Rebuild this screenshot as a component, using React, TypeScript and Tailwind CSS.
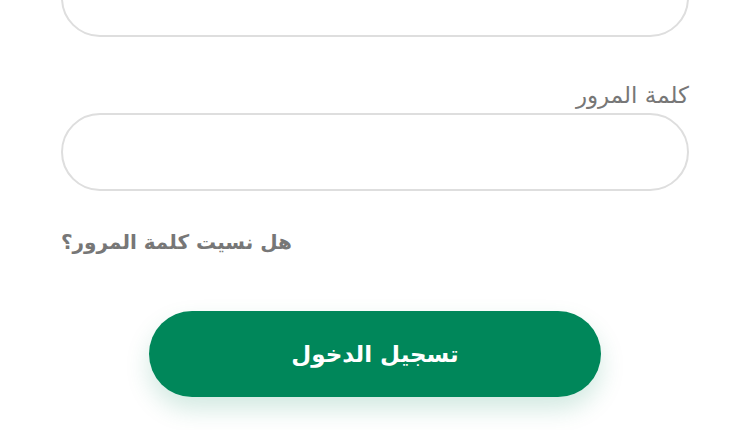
export default function App() {
  return (
    <div
      dir="rtl"
      className="w-[750px] h-[430px] overflow-hidden bg-white font-['DejaVu_Sans',sans-serif]"
    >
      <div className="mx-auto -mt-[41px] flex w-[628px] flex-col">
        {/* email field (cut off at top) */}
        <input
          type="text"
          className="h-[78px] w-full rounded-full border-2 border-[#dedede] bg-white px-6 outline-none"
        />

        <label className="mt-[42px] text-[23px] leading-[32px] text-[#777777]">
          كلمة المرور
        </label>
        <input
          type="password"
          className="mt-[2px] h-[78px] w-full rounded-full border-2 border-[#dedede] bg-white px-6 outline-none"
        />

        <a className="mt-[37px] text-left text-[20px] font-bold leading-[28px] text-[#777777]">
          هل نسيت كلمة المرور؟
        </a>

        <button className="mt-[55px] h-[86px] w-[452px] self-center rounded-full bg-[#00875a] text-[23px] font-bold text-white shadow-[0_12px_24px_rgba(0,135,90,0.18)]">
          تسجيل الدخول
        </button>
      </div>
    </div>
  );
}
